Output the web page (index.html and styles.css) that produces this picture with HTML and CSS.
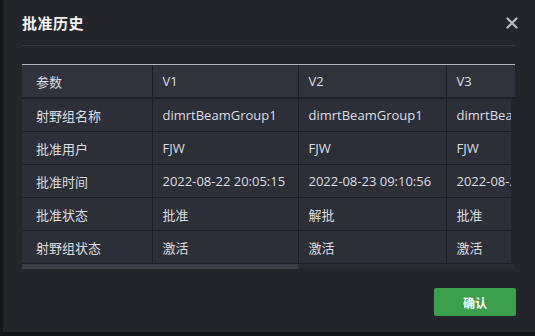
FILE: index.html
```html
<!DOCTYPE html>
<html lang="zh-CN">
<head>
    <meta charset="UTF-8">
    <meta name="viewport" content="width=device-width, initial-scale=1.0">
    <title>批准历史</title>
    <link rel="stylesheet" href="styles.css">
</head>
<body>
    <div class="dialog">
        <div class="dialog-header">
            <h2 class="dialog-title">批准历史</h2>
            <span class="close-btn">
                <svg width="12" height="12" viewBox="0 0 12 12">
                    <path d="M1.5 1.5 L10.5 10.5 M10.5 1.5 L1.5 10.5" stroke="#b9bdc7" stroke-width="2.2" stroke-linecap="round"/>
                </svg>
            </span>
        </div>

        <div class="history">
            <div class="history-head">
                <table class="grid">
                    <colgroup>
                        <col class="col-param"><col class="col-v1"><col class="col-v"><col class="col-v">
                    </colgroup>
                    <tr>
                        <th>参数</th><th>V1</th><th>V2</th><th>V3</th>
                    </tr>
                </table>
            </div>
            <div class="history-body">
                <table class="grid">
                    <colgroup>
                        <col class="col-param"><col class="col-v1"><col class="col-v"><col class="col-v">
                    </colgroup>
                    <tr>
                        <td>射野组名称</td><td>dimrtBeamGroup1</td><td>dimrtBeamGroup1</td><td>dimrtBeamGroup1</td>
                    </tr>
                    <tr>
                        <td>批准用户</td><td>FJW</td><td>FJW</td><td>FJW</td>
                    </tr>
                    <tr>
                        <td>批准时间</td><td>2022-08-22 20:05:15</td><td>2022-08-23 09:10:56</td><td>2022-08-24 10:12:30</td>
                    </tr>
                    <tr>
                        <td>批准状态</td><td>批准</td><td>解批</td><td>批准</td>
                    </tr>
                    <tr>
                        <td>射野组状态</td><td>激活</td><td>激活</td><td>激活</td>
                    </tr>
                </table>
            </div>
            <div class="scrollbar">
                <div class="scrollbar-thumb"></div>
            </div>
        </div>

        <div class="dialog-footer">
            <button class="confirm-btn">确认</button>
        </div>
    </div>
</body>
</html>
```

FILE: styles.css
```css
body {
    margin: 0;
    padding: 0;
    background-color: #141518;
    font-family: "Open Sans", "Noto Sans CJK SC", sans-serif;
    overflow: hidden;
}
.dialog {
    box-sizing: border-box;
    width: 532px;
    height: 332px;
    margin-left: 3px;
    padding: 0 20px 0 19px;
    background-color: #23252a;
}
.dialog-header {
    height: 45px;
    display: flex;
    align-items: center;
    justify-content: space-between;
    border-bottom: 1px solid #34363c;
}
.dialog-title {
    margin: 0;
    font-family: "Noto Sans CJK SC", sans-serif;
    font-size: 15px;
    font-weight: bold;
    color: #f2f2f2;
    letter-spacing: 0.5px;
}
.close-btn {
    display: flex;
    margin-right: -3px;
}
.history {
    margin-top: 18px;
    border-top: 1px solid #b4b6ba;
}
.history-head {
    overflow: hidden;
    width: 493px;
    background-color: #30333c;
}
.history-body {
    overflow: hidden;
    width: 489px;
}
.grid {
    border-collapse: collapse;
    table-layout: fixed;
    width: 572px;
}
.col-param {
    width: 130px;
}
.col-v1 {
    width: 146px;
}
.col-v {
    width: 148px;
}
.grid th,
.grid td {
    height: 32px;
    padding: 0 10px;
    border: 1px solid #1d1f24;
    font-size: 13px;
    font-weight: normal;
    color: #dcdee2;
    text-align: left;
    white-space: nowrap;
    overflow: hidden;
}
.grid th {
    background-color: #30333c;
    border-top: none;
}
.grid td {
    background-color: #2c2f37;
}
.grid th:first-child,
.grid td:first-child {
    padding-left: 14px;
    border-left: none;
    font-family: "Noto Sans CJK SC", sans-serif;
}
.scrollbar {
    height: 5px;
    width: 493px;
    background-color: #2a2c32;
}
.scrollbar-thumb {
    width: 276px;
    height: 5px;
    background-color: #3b3e46;
}
.dialog-footer {
    display: flex;
    justify-content: flex-end;
    margin-top: 19px;
    margin-right: -1px;
}
.confirm-btn {
    width: 82px;
    height: 28px;
    border: none;
    border-radius: 2px;
    background-color: #3c9f4d;
    color: #fff;
    font-family: "Noto Sans CJK SC", sans-serif;
    font-size: 12px;
    font-weight: bold;
    cursor: pointer;
}
```
